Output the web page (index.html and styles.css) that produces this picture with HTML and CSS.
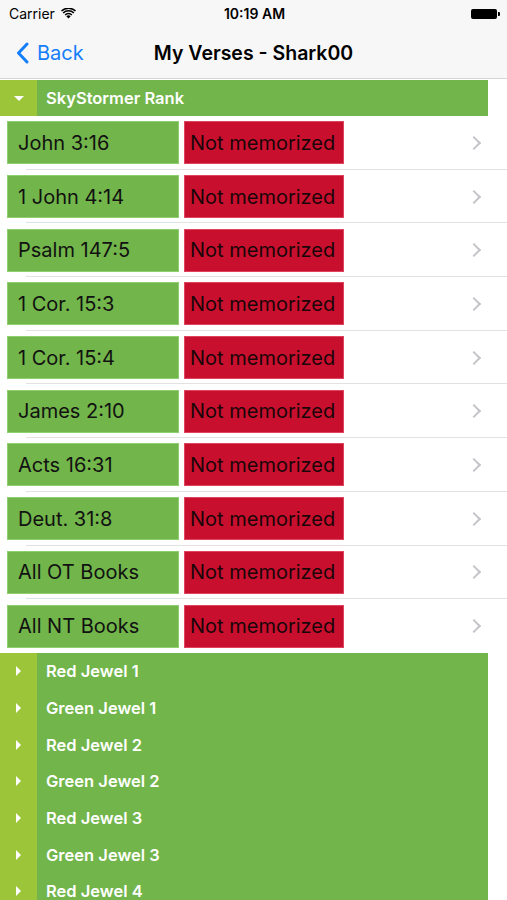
FILE: index.html
```html
<!DOCTYPE html>
<html lang="en">
<head>
    <meta charset="UTF-8">
    <meta name="viewport" content="width=device-width, initial-scale=1.0">
    <title>My Verses</title>
    <link rel="stylesheet" href="styles.css">
</head>
<body>
    <div class="top-bar">
        <div class="status-bar">
            <div class="carrier">Carrier
                <svg class="wifi" width="15" height="11" viewBox="0 0 15 11">
                    <path d="M7.5 10.5 L5.3 8.2 A3.2 3.2 0 0 1 9.7 8.2 Z" fill="#000"/>
                    <path d="M3.6 6.4 A5.6 5.6 0 0 1 11.4 6.4 L10.3 7.5 A4.1 4.1 0 0 0 4.7 7.5 Z" fill="#000"/>
                    <path d="M1.6 4.4 A8.5 8.5 0 0 1 13.4 4.4 L12.3 5.5 A7 7 0 0 0 2.7 5.5 Z" fill="#000"/>
                    <path d="M0 2.5 A10.8 10.8 0 0 1 15 2.5 L14 3.5 A9.4 9.4 0 0 0 1 3.5 Z" fill="#000"/>
                </svg>
            </div>
            <div class="time">10:19 AM</div>
            <div class="battery"><span class="battery-body"></span><span class="battery-tip"></span></div>
        </div>
        <div class="nav-bar">
            <div class="back">
                <svg width="13" height="22" viewBox="0 0 13 22">
                    <path d="M11 2 L2.5 11 L11 20" fill="none" stroke="#147efb" stroke-width="3" stroke-linecap="round" stroke-linejoin="round"/>
                </svg>
                <span>Back</span>
            </div>
            <div class="title">My Verses - Shark00</div>
        </div>
    </div>

    <div class="section open">
        <div class="section-toggle"><span class="tri-down"></span></div>
        <div class="section-name">SkyStormer Rank</div>
    </div>

    <div class="verse-list">
        <div class="verse-row"><div class="ref">John 3:16</div><div class="status">Not memorized</div><div class="chev"></div></div>
        <div class="verse-row"><div class="ref">1 John 4:14</div><div class="status">Not memorized</div><div class="chev"></div></div>
        <div class="verse-row"><div class="ref">Psalm 147:5</div><div class="status">Not memorized</div><div class="chev"></div></div>
        <div class="verse-row"><div class="ref">1 Cor. 15:3</div><div class="status">Not memorized</div><div class="chev"></div></div>
        <div class="verse-row"><div class="ref">1 Cor. 15:4</div><div class="status">Not memorized</div><div class="chev"></div></div>
        <div class="verse-row"><div class="ref">James 2:10</div><div class="status">Not memorized</div><div class="chev"></div></div>
        <div class="verse-row"><div class="ref">Acts 16:31</div><div class="status">Not memorized</div><div class="chev"></div></div>
        <div class="verse-row"><div class="ref">Deut. 31:8</div><div class="status">Not memorized</div><div class="chev"></div></div>
        <div class="verse-row"><div class="ref">All OT Books</div><div class="status">Not memorized</div><div class="chev"></div></div>
        <div class="verse-row last"><div class="ref">All NT Books</div><div class="status">Not memorized</div><div class="chev"></div></div>
    </div>

    <div class="section"><div class="section-toggle"><span class="tri-right"></span></div><div class="section-name">Red Jewel 1</div></div>
    <div class="section"><div class="section-toggle"><span class="tri-right"></span></div><div class="section-name">Green Jewel 1</div></div>
    <div class="section"><div class="section-toggle"><span class="tri-right"></span></div><div class="section-name">Red Jewel 2</div></div>
    <div class="section"><div class="section-toggle"><span class="tri-right"></span></div><div class="section-name">Green Jewel 2</div></div>
    <div class="section"><div class="section-toggle"><span class="tri-right"></span></div><div class="section-name">Red Jewel 3</div></div>
    <div class="section"><div class="section-toggle"><span class="tri-right"></span></div><div class="section-name">Green Jewel 3</div></div>
    <div class="section"><div class="section-toggle"><span class="tri-right"></span></div><div class="section-name">Red Jewel 4</div></div>
</body>
</html>
```

FILE: styles.css
```css
body {
    font-family: Inter, "Liberation Sans", sans-serif;
    margin: 0;
    padding: 0;
    overflow: hidden;
    background: #ffffff;
    width: 507px;
    height: 900px;
}

.top-bar {
    background: #f7f7f7;
    border-bottom: 1px solid #d6d6d6;
    height: 78px;
}

.status-bar {
    height: 27px;
    display: flex;
    align-items: center;
    justify-content: space-between;
    padding: 0 7px 0 9px;
    font-size: 14px;
    color: #000;
}

.carrier {
    display: flex;
    align-items: center;
    gap: 6px;
    width: 120px;
}

.time {
    font-weight: 600;
}

.battery {
    width: 120px;
    display: flex;
    justify-content: flex-end;
    align-items: center;
}

.battery-body {
    width: 26px;
    height: 10px;
    background: #000;
    border-radius: 2px;
}

.battery-tip {
    width: 2px;
    height: 4px;
    background: #000;
    border-radius: 0 1px 1px 0;
    margin-left: 1px;
}

.nav-bar {
    height: 51px;
    display: flex;
    align-items: center;
    position: relative;
}

.back {
    display: flex;
    align-items: center;
    gap: 8px;
    padding-left: 16px;
    color: #147efb;
    font-size: 20px;
}

.title {
    position: absolute;
    left: 0;
    right: 0;
    text-align: center;
    font-size: 19.5px;
    font-weight: 600;
    color: #000;
    pointer-events: none;
}

.section {
    display: flex;
    width: 488px;
    height: 36.7px;
    background: #72b54a;
}

.section.open {
    height: 36px;
    margin-top: 1px;
}

.section-toggle {
    width: 37px;
    background: #9dc53a;
    display: flex;
    align-items: center;
    justify-content: center;
}

.tri-down {
    width: 0;
    height: 0;
    border-left: 5px solid transparent;
    border-right: 5px solid transparent;
    border-top: 5px solid #ffffff;
}

.tri-right {
    width: 0;
    height: 0;
    border-top: 5px solid transparent;
    border-bottom: 5px solid transparent;
    border-left: 5px solid #ffffff;
}

.section-name {
    display: flex;
    align-items: center;
    padding-left: 9px;
    color: #ffffff;
    font-size: 16.5px;
    font-weight: 600;
}

.verse-row {
    height: 53.7px;
    display: flex;
    align-items: center;
    padding-left: 7px;
    position: relative;
}

.verse-row::after {
    content: "";
    position: absolute;
    left: 26px;
    right: 0;
    bottom: 0;
    height: 1px;
    background: #e2e2e2;
}

.verse-row.last::after {
    display: none;
}

.ref {
    width: 160px;
    height: 41px;
    background: #72b54a;
    border: 1px solid #8fcf70;
    display: flex;
    align-items: center;
    padding-left: 10px;
    font-size: 20px;
    color: #111;
}

.status {
    width: 153px;
    height: 41px;
    margin-left: 5px;
    background: #c8102e;
    border: 1px solid #e04560;
    display: flex;
    align-items: center;
    padding-left: 5px;
    font-size: 20px;
    color: #1a0508;
}

.chev {
    margin-left: auto;
    margin-right: 28px;
    width: 8px;
    height: 8px;
    border-right: 2px solid #c4c4c9;
    border-top: 2px solid #c4c4c9;
    transform: rotate(45deg);
}
```
